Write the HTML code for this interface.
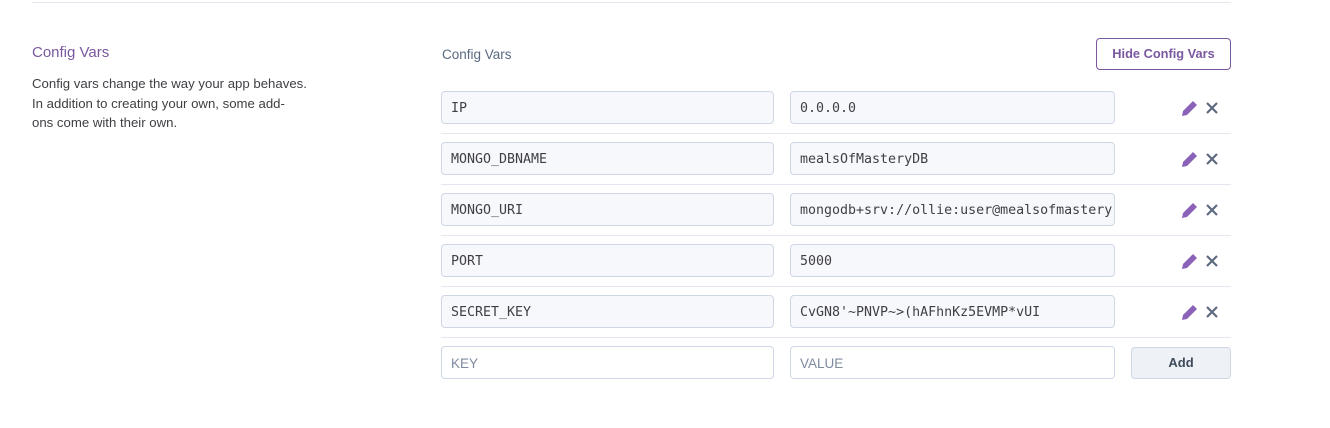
<!DOCTYPE html>
<html><head><style>
body{margin:0;width:1330px;height:428px;background:#fff;font-family:"Liberation Sans",sans-serif;position:relative;overflow:hidden}
.a{position:absolute}
.top{left:32px;top:2px;width:1199px;height:1px;background:#e3e7ef}
h2{position:absolute;left:32px;top:44px;margin:0;font-size:15px;font-weight:normal;color:#79589f}
.desc{left:32px;top:74px;font-size:13.2px;line-height:19.5px;color:#3f3f44;width:300px}
.lbl{left:442px;top:47px;font-size:13.5px;color:#596981}
.btn{left:1096px;top:38px;width:133px;height:30px;border:1px solid #79589f;border-radius:4px;color:#79589f;font-size:12.8px;font-weight:bold;text-align:center;line-height:30px}
.in{position:absolute;border:1px solid #cfd7e6;border-radius:4px;background:#f7f8fb;font-family:"DejaVu Sans Mono",monospace;font-size:13.3px;color:#3f3f44;line-height:33px;padding-left:9px;box-sizing:border-box;height:33px;overflow:hidden;white-space:nowrap}
.k{left:441px;width:333px}.v{left:790px;width:325px}
.hr{left:441px;width:790px;height:1px;background:#e3e7ef}
.ph{background:#fff;color:#7f8ba0;font-family:"Liberation Sans",sans-serif;font-size:13.5px}
.add{left:1131px;top:347px;width:100px;height:32px;box-sizing:border-box;border:1px solid #cfd7e6;border-radius:4px;background:#eef1f6;color:#3f4b5b;font-size:13px;font-weight:bold;text-align:center;line-height:30px}
</style></head><body>
<div class="a top"></div>
<h2>Config Vars</h2>
<div class="a desc">Config vars change the way your app behaves.<br>In addition to creating your own, some add-<br>ons come with their own.</div>
<div class="a lbl">Config Vars</div>
<div class="a btn">Hide Config Vars</div>

<div class="in k" style="top:91px">IP</div><div class="in v" style="top:91px">0.0.0.0</div>
<div class="a hr" style="top:133px"></div>
<div class="in k" style="top:142px">MONGO_DBNAME</div><div class="in v" style="top:142px">mealsOfMasteryDB</div>
<div class="a hr" style="top:184px"></div>
<div class="in k" style="top:193px">MONGO_URI</div><div class="in v" style="top:193px">mongodb+srv://ollie:user@mealsofmastery</div>
<div class="a hr" style="top:235px"></div>
<div class="in k" style="top:244px">PORT</div><div class="in v" style="top:244px">5000</div>
<div class="a hr" style="top:286px"></div>
<div class="in k" style="top:295px">SECRET_KEY</div><div class="in v" style="top:295px">CvGN8'~PNVP~&gt;(hAFhnKz5EVMP*vUI</div>
<div class="a hr" style="top:337px"></div>
<div class="in k ph" style="top:346px">KEY</div><div class="in v ph" style="top:346px">VALUE</div>
<div class="a add">Add</div>

<svg class="a" style="left:1180px;top:98px" width="44" height="230" viewBox="0 0 44 230">
<g id="r">
<path d="M2 18 L3 13 L13 3 L17 7 L7 17 Z" fill="#8a62b8"/>
<path d="M27 5 L37 15 M37 5 L27 15" stroke="#5d6a7e" stroke-width="2.2"/>
</g>
<use href="#r" y="51"/><use href="#r" y="102"/><use href="#r" y="153"/><use href="#r" y="204"/>
</svg>
</body></html>
